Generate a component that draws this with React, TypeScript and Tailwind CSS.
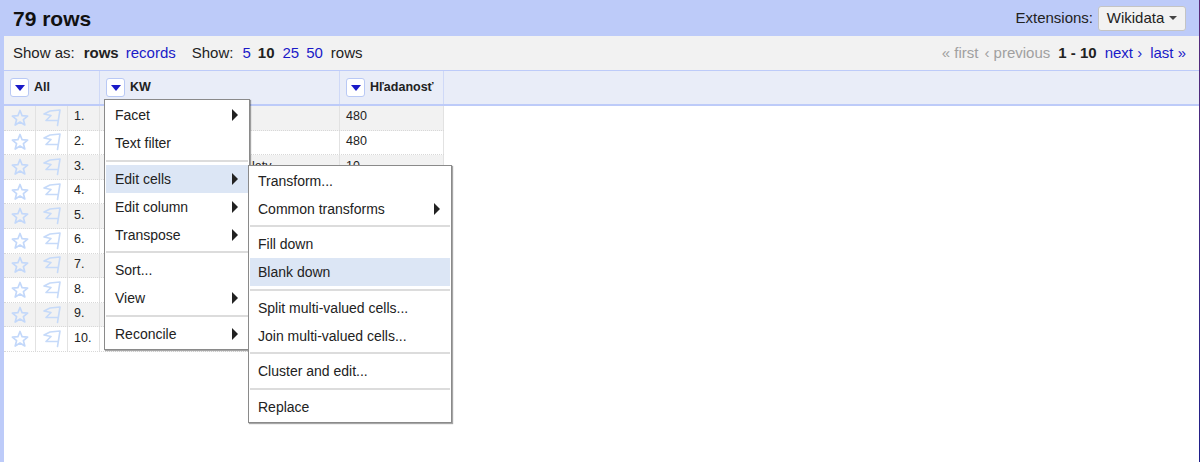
const rowNumbers = [1, 2, 3, 4, 5, 6, 7, 8, 9, 10];
const values: Record<number, string> = { 1: "480", 2: "480", 3: "10" };
const keywords: Record<number, string> = { 3: "lety" };

function Star() {
  return (
    <svg width="18" height="18" viewBox="0 0 18 18" fill="none" stroke="#c3d8fa" strokeWidth="1.7" strokeLinejoin="round">
      <path d="M9 1.5 11.1 6.7 16.6 7.1 12.4 10.6 13.8 16 9 13.1 4.2 16 5.6 10.6 1.4 7.1 6.9 6.7Z" />
    </svg>
  );
}

function Flag() {
  return (
    <svg width="18" height="18" viewBox="0 0 18 18" fill="none" stroke="#c6daf9" strokeWidth="1.6" strokeLinejoin="round" strokeLinecap="round">
      <path d="M1 5 7 2 17 1 14.5 16.5 M1 5 8 6.5 3 11.5 15 11.5" />
    </svg>
  );
}

function DropButton() {
  return (
    <span className="flex h-[19px] w-[19px] shrink-0 items-center justify-center rounded-[3px] border border-[#b9c9f5] bg-white">
      <span className="h-0 w-0 border-x-[5px] border-t-[6px] border-x-transparent border-t-[#1a1ac8]" />
    </span>
  );
}

function MenuItem({ label, arrow, active, sub }: { label: string; arrow?: boolean; active?: boolean; sub?: boolean }) {
  return (
    <div className={`flex h-[28px] items-center justify-between pr-[10px] text-[14px] leading-none text-[#222] ${sub ? "pl-[8px]" : "pl-[9px]"} ${active ? "bg-[#dce6f5]" : ""}`}>
      <span>{label}</span>
      {arrow && <span className="h-0 w-0 border-y-[6px] border-l-[6px] border-y-transparent border-l-[#222]" />}
    </div>
  );
}

function Sep() {
  return (
    <div className="flex h-[7.5px] items-center">
      <div className="h-[2px] w-full bg-[#dcdcdc]" />
    </div>
  );
}

export default function App() {
  return (
    <div className="relative h-[462px] w-[1200px] overflow-hidden bg-white font-['Liberation_Sans',Arial,sans-serif] text-[#222]">
      {/* title bar */}
      <div className="flex h-[36px] items-center justify-between bg-[#bdcbf9] pl-[13px] pr-[14px]">
        <h1 className="text-[21px] font-bold leading-none text-[#111]">79 rows</h1>
        <div className="flex items-center gap-[5px] text-[15px]">
          <span>Extensions:</span>
          <button className="flex h-[25px] w-[88px] items-center justify-center gap-[5px] rounded-[3px] border border-[#c4c4c4] bg-[#f2f2f2] text-[15px]">
            Wikidata
            <span className="h-0 w-0 border-x-[4px] border-t-[4px] border-x-transparent border-t-[#444]" />
          </button>
        </div>
      </div>

      <div className="ml-[4px] flex min-h-[426px] flex-col">
        {/* viewing controls */}
        <div className="flex h-[35px] items-center justify-between border-b border-[#bdcbf9] bg-[#f2f2f2] pl-[9px] pr-[14px] text-[15px]">
          <div className="flex items-center">
            <span>Show as:</span>
            <b className="ml-[9px]">rows</b>
            <span className="ml-[7px] text-[#1a1ac8]">records</span>
            <span className="ml-[16px]">Show:</span>
            <span className="ml-[9px] text-[#1a1ac8]">5</span>
            <b className="ml-[7px]">10</b>
            <span className="ml-[8px] text-[#1a1ac8]">25</span>
            <span className="ml-[7px] text-[#1a1ac8]">50</span>
            <span className="ml-[8px]">rows</span>
          </div>
          <div className="flex items-center">
            <span className="text-[#a0a0a0]">« first</span>
            <span className="ml-[6px] text-[#a0a0a0]">‹ previous</span>
            <b className="ml-[8px]">1 - 10</b>
            <span className="ml-[8px] text-[#1a1ac8]">next ›</span>
            <span className="ml-[8px] text-[#1a1ac8]">last »</span>
          </div>
        </div>

        {/* table head */}
        <div className="flex h-[35px] border-b-[2px] border-[#bdcbf9] bg-[#e9edf8] text-[12.5px] font-bold text-[#222]">
          <div className="flex w-[96px] items-center gap-[5px] border-r border-[#cfd9f7] pl-[6px]">
            <DropButton />
            All
          </div>
          <div className="flex w-[240px] items-center gap-[5px] border-r border-[#cfd9f7] pl-[6px]">
            <DropButton />
            KW
          </div>
          <div className="flex w-[104px] items-center gap-[5px] border-r border-[#cfd9f7] pl-[6px]">
            <DropButton />
            Hľadanosť
          </div>
        </div>

        {/* rows */}
        {rowNumbers.map((n) => (
          <div key={n} className={`flex h-[24.6px] w-[440px] border-b border-dotted border-[#d8d8d8] text-[12.5px] text-[#222] ${n % 2 === 1 ? "bg-[#f2f2f2]" : "bg-white"}`}>
            <div className="flex w-[32px] items-center justify-center border-r border-[#e2e2e2]">
              <Star />
            </div>
            <div className="flex w-[32px] items-center justify-center border-r border-[#e2e2e2]">
              <Flag />
            </div>
            <div className="flex w-[32px] items-center border-r border-[#e2e2e2] pb-[2px] pl-[6px]">{n}.</div>
            <div className="flex w-[240px] items-center border-r border-[#e2e2e2] pb-[2px] pl-[152px]">{keywords[n]}</div>
            <div className="flex w-[104px] items-center border-r border-[#e2e2e2] pb-[2px] pl-[6px]">{values[n]}</div>
          </div>
        ))}
      </div>

      {/* left page edge */}
      <div className="absolute bottom-0 left-0 top-[36px] w-[4px] bg-[#bdcbf9]" />
      {/* window edge */}
      <div className="absolute bottom-0 right-0 top-0 w-[1.5px] bg-linear-to-b from-[#5a2a7a] to-[#1e1e8a]" />

      {/* column menu */}
      <div className="absolute left-[104px] top-[99px] w-[146px] border border-[#8a8a8a] bg-white px-[1px] py-[1px] shadow-[1px_1px_1px_rgba(0,0,0,0.35)]">
        <MenuItem label="Facet" arrow />
        <MenuItem label="Text filter" />
        <Sep />
        <MenuItem label="Edit cells" arrow active />
        <MenuItem label="Edit column" arrow />
        <MenuItem label="Transpose" arrow />
        <Sep />
        <MenuItem label="Sort..." />
        <MenuItem label="View" arrow />
        <Sep />
        <MenuItem label="Reconcile" arrow />
      </div>

      {/* Edit cells submenu */}
      <div className="absolute left-[248px] top-[164.5px] w-[204px] border border-[#8a8a8a] bg-white px-[1px] py-[1px] shadow-[1px_1px_1px_rgba(0,0,0,0.35)]">
        <MenuItem sub label="Transform..." />
        <MenuItem sub label="Common transforms" arrow />
        <Sep />
        <MenuItem sub label="Fill down" />
        <MenuItem sub label="Blank down" active />
        <Sep />
        <MenuItem sub label="Split multi-valued cells..." />
        <MenuItem sub label="Join multi-valued cells..." />
        <Sep />
        <MenuItem sub label="Cluster and edit..." />
        <Sep />
        <MenuItem sub label="Replace" />
      </div>
    </div>
  );
}
